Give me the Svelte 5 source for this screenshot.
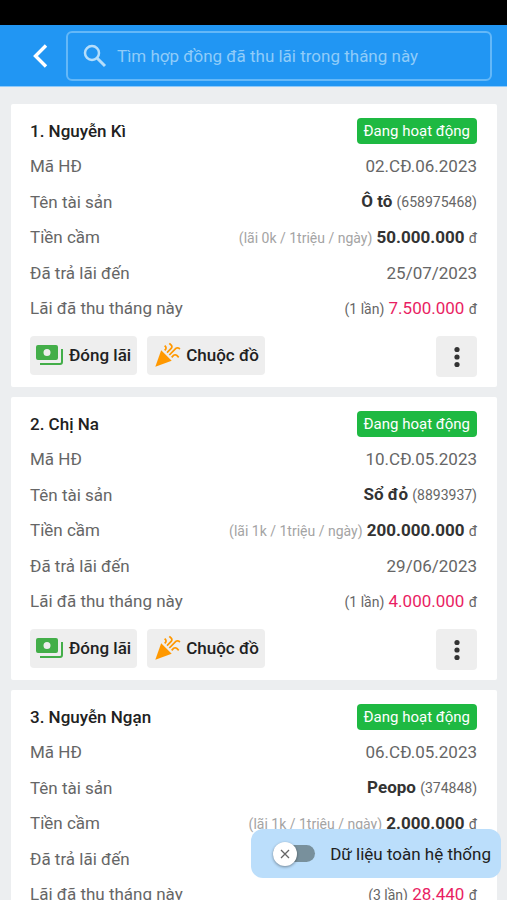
<script>
    let search = $state("");
    let wholeSystem = $state(false);

    const contracts = [
        { name: "Nguyễn Kì", code: "02.CĐ.06.2023", asset: "Ô tô", assetNo: "658975468", rate: "lãi 0k / 1triệu / ngày", amount: "50.000.000", paidTo: "25/07/2023", times: 1, interest: "7.500.000" },
        { name: "Chị Na", code: "10.CĐ.05.2023", asset: "Sổ đỏ", assetNo: "8893937", rate: "lãi 1k / 1triệu / ngày", amount: "200.000.000", paidTo: "29/06/2023", times: 1, interest: "4.000.000" },
        { name: "Nguyễn Ngạn", code: "06.CĐ.05.2023", asset: "Peopo", assetNo: "374848", rate: "lãi 1k / 1triệu / ngày", amount: "2.000.000", paidTo: "", times: 3, interest: "28.440" }
    ];
</script>

<div class="screen">
    <div class="statusBar"></div>
    <header>
        <button class="back" aria-label="Quay lại">
            <svg width="16" height="26" viewBox="0 0 16 26"><path d="M14 2.500 3.500 13 14 23.500" fill="none" stroke="#fff" stroke-width="3.400" /></svg>
        </button>
        <label class="search">
            <svg width="24" height="24" viewBox="0 0 24 24" fill="none" stroke="#b5defb" stroke-width="2.500">
                <circle cx="9" cy="9" r="7" />
                <path d="M14 14l8 8" stroke-width="3" />
            </svg>
            <input type="text" bind:value={search} placeholder="Tìm hợp đồng đã thu lãi trong tháng này" aria-label="Tìm hợp đồng">
        </label>
    </header>

    <main>
        {#each contracts as c, i}
        <section class="card">
            <div class="rows">
                <div class="row">
                    <h2>{i + 1}. {c.name}</h2>
                    <span class="badge">Đang hoạt động</span>
                </div>
                <div class="row"><span>Mã HĐ</span><span>{c.code}</span></div>
                <div class="row"><span>Tên tài sản</span><span><b>{c.asset}</b> <small>({c.assetNo})</small></span></div>
                <div class="row"><span>Tiền cầm</span><span><small class="rate">({c.rate})</small> <b>{c.amount}</b> <small>đ</small></span></div>
                <div class="row"><span>Đã trả lãi đến</span><span>{c.paidTo}</span></div>
                <div class="row"><span>Lãi đã thu tháng này</span><span><small>({c.times} lần)</small> <span class="interest">{c.interest}</span> <small>đ</small></span></div>
            </div>
            <div class="actions">
                <button class="action">
                    <svg width="28" height="22" viewBox="0 0 28 22">
                        <path fill="#43ae49" fill-rule="evenodd" d="M2 1h18a2 2 0 0 1 2 2v11a2 2 0 0 1-2 2H2a2 2 0 0 1-2-2V3a2 2 0 0 1 2-2zM11 5a3.500 3.500 0 1 0 0 7a3.500 3.500 0 0 0 0-7z" />
                        <path d="M4 20h20a2 2 0 0 0 2-2V5" fill="none" stroke="#43ae49" stroke-width="2" />
                    </svg>
                    Đóng lãi
                </button>
                <button class="action">
                    <svg width="28" height="28" viewBox="0 0 24 24" fill="#ff9800">
                        <path d="M2 22l14-5-9-9z" />
                        <path d="M14.530 12.530l5.590-5.590c.49-.49 1.280-.49 1.770 0l.59.59 1.060-1.060-.59-.59c-1.070-1.070-2.820-1.070-3.890 0l-5.590 5.590z" />
                        <path d="M10.060 6.880l-.59.59 1.060 1.060.59-.59c1.070-1.070 1.070-2.820 0-3.890l-.59-.59-1.060 1.070.59.59c.48.48.48 1.280 0 1.760z" />
                        <path d="M17.060 11.880l-1.590 1.590 1.060 1.060 1.590-1.590c.49-.49 1.280-.49 1.770 0l1.610 1.610 1.060-1.060-1.610-1.610c-1.080-1.070-2.820-1.070-3.900 0z" />
                        <path d="M15.060 5.880l-3.590 3.590 1.060 1.060 3.590-3.590c1.070-1.070 1.070-2.820 0-3.890l-1.590-1.590-1.060 1.060 1.590 1.590c.48.49.48 1.290 0 1.770z" />
                    </svg>
                    Chuộc đồ
                </button>
                <button class="more" aria-label="Thêm">
                    <svg width="6" height="22" viewBox="0 0 6 22" fill="#333">
                        <circle cx="3" cy="3.500" r="2.600" />
                        <circle cx="3" cy="11" r="2.600" />
                        <circle cx="3" cy="18.500" r="2.600" />
                    </svg>
                </button>
            </div>
        </section>
        {/each}
    </main>

    <label class="system">
        <input type="checkbox" role="switch" bind:checked={wholeSystem}>
        <span class="track">
            <span class="thumb">
                <svg width="10" height="10" viewBox="0 0 10 10"><path d="M1 1l8 8M9 1l-8 8" stroke="#666" stroke-width="1.300" /></svg>
            </span>
        </span>
        Dữ liệu toàn hệ thống
    </label>
</div>

<style>
    :global(body) {
        background: #eceef0;
    }
    .screen {
        height: 100vh;
        display: flex;
        flex-direction: column;
        overflow: hidden;
        position: relative;
        background: #eceef0;
        color: #666;
        font-family: Roboto, sans-serif;
        font-size: 17px;
        line-height: 22px;
    }
    .statusBar {
        flex: none;
        height: 25px;
        background: #000;
    }
    header {
        flex: none;
        display: flex;
        align-items: center;
        padding: 6px 15px 5px 0;
        background: #2196f3;
        border-bottom: 1px solid #90caf9;
    }
    button {
        border: none;
        font: inherit;
        cursor: pointer;
    }
    .back {
        width: 66px;
        display: flex;
        justify-content: center;
        padding: 0 0 0 14px;
        background: none;
    }
    .search {
        flex: 1;
        display: flex;
        align-items: center;
        gap: 10px;
        height: 50px;
        box-sizing: border-box;
        padding: 0 15px;
        border: 2px solid #64b8f8;
        border-radius: 6px;
    }
    .search input {
        flex: 1;
        min-width: 0;
        padding: 0;
        border: none;
        outline: none;
        background: none;
        color: #fff;
        font: inherit;
    }
    .search input::placeholder {
        color: #90ccf9;
        opacity: 1;
    }
    main {
        flex: 1;
        overflow-y: auto;
        scrollbar-width: none;
        display: flex;
        flex-direction: column;
        gap: 10px;
        padding: 17px 10px 80px 11px;
    }
    .card {
        flex: none;
        padding: 9px 20px 10px 19px;
        border-radius: 2px;
        background: #fff;
    }
    .rows {
        display: grid;
        grid-auto-rows: 1fr;
        height: 213px;
    }
    .row {
        display: flex;
        justify-content: space-between;
        align-items: center;
        white-space: nowrap;
    }
    h2 {
        margin: 0;
        color: #212121;
        font-size: 17px;
        font-weight: 500;
    }
    b {
        color: #333;
        font-weight: 700;
    }
    small {
        font-size: 14px;
    }
    .rate {
        color: #a4a4a4;
    }
    .interest {
        color: #e91e63;
    }
    .badge {
        padding: 2px 7px;
        border-radius: 4px;
        background: #1eb942;
        color: #fff;
        font-size: 15px;
    }
    .actions {
        display: flex;
        align-items: flex-start;
        gap: 10px;
        margin-top: 10px;
    }
    .action {
        display: flex;
        align-items: center;
        gap: 5px;
        height: 39px;
        padding: 0 6px 2px;
        border-radius: 4px;
        background: #eee;
        color: #212121;
        font-weight: 500;
    }
    .more {
        display: flex;
        justify-content: center;
        align-items: center;
        width: 41px;
        height: 41px;
        margin-left: auto;
        padding: 0;
        border-radius: 4px;
        background: #eee;
    }
    .system {
        position: absolute;
        right: 6px;
        bottom: 22px;
        display: flex;
        align-items: center;
        gap: 15px;
        height: 49px;
        box-sizing: border-box;
        padding: 0 10px 0 22px;
        border-radius: 12px;
        background: #bbdefb;
        color: #212121;
        cursor: pointer;
    }
    .system input {
        position: absolute;
        opacity: 0;
    }
    .track {
        display: flex;
        align-items: center;
        width: 42px;
        height: 17px;
        border-radius: 9px;
        background: #78909c;
    }
    .thumb {
        flex: none;
        display: flex;
        justify-content: center;
        align-items: center;
        width: 24px;
        height: 24px;
        border-radius: 50%;
        background: #fff;
        box-shadow: 0 1px 3px rgba(0, 0, 0, 0.4);
    }
    .system input:checked + .track {
        justify-content: flex-end;
        background: #2196f3;
    }
</style>
